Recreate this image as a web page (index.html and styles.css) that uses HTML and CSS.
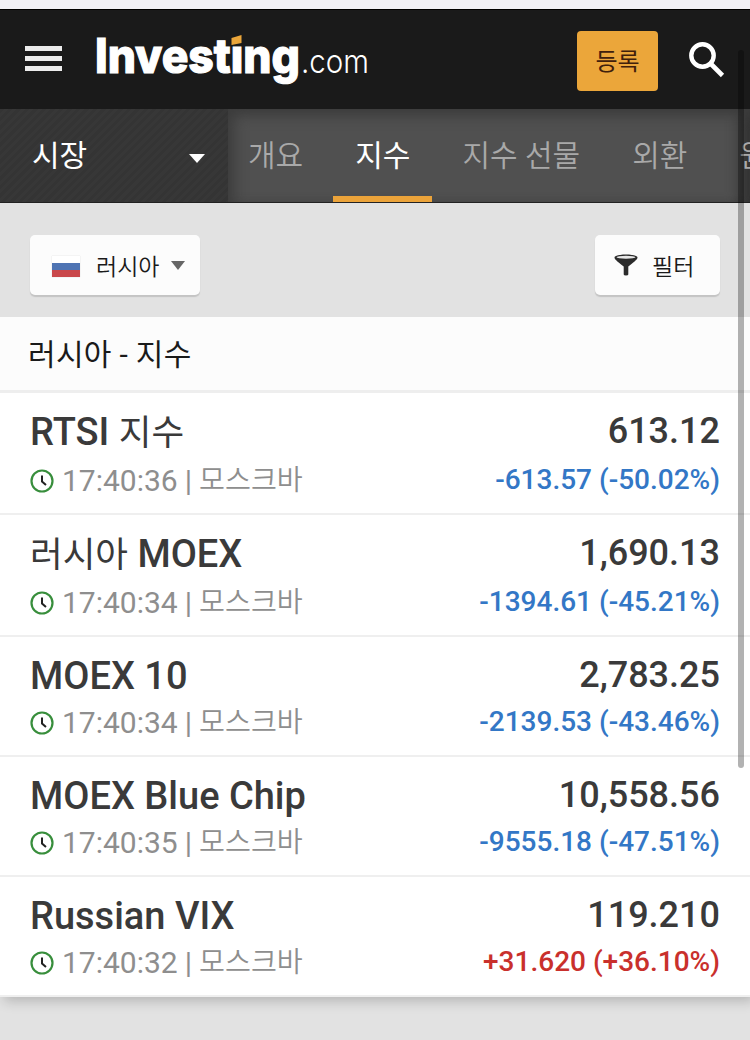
FILE: index.html
```html
<!doctype html>
<html lang="ko">
<head>
    <meta charset="utf-8">
    <meta content="width=device-width,initial-scale=1" name="viewport">
    <title>러시아 - 지수</title>
    <link rel="stylesheet" href="styles.css">
</head>
<body>
<div class="statusbar"></div>
<header class="header">
    <div class="menu"><i></i><i></i><i></i></div>
    <svg class="logo" width="280" height="60" viewBox="0 0 280 60">
        <text class="logo-name" x="-1" y="43" textLength="205" lengthAdjust="spacingAndGlyphs">Investing</text>
        <text class="logo-com" x="205" y="43" textLength="68" lengthAdjust="spacingAndGlyphs">.com</text>
        <rect x="134" y="0" width="13" height="15" fill="#1a1a1a"/>
        <path d="M135.500 8l10-3v8l-10 2z" fill="#eba63a"/>
    </svg>
    <a class="signup">등록</a>
    <svg class="search" width="36" height="36" viewBox="0 0 36 36" fill="none" stroke="#fff">
        <circle cx="13.500" cy="13.500" r="11.200" stroke-width="4.400"/>
        <path d="M21.500 21.500L33.500 33.500" stroke-width="4.600"/>
    </svg>
</header>
<nav class="nav">
    <div class="market">시장<i class="arrow"></i></div>
    <div class="tabs">
        <a class="tab">개요</a>
        <a class="tab active">지수</a>
        <a class="tab">지수 선물</a>
        <a class="tab">외환</a>
        <a class="tab">원</a>
    </div>
</nav>
<div class="filters">
    <div class="btn country"><i class="flag"></i>러시아<i class="arrow"></i></div>
    <div class="btn filter">
        <svg width="24" height="22" viewBox="0 0 24 22">
            <path d="M.5 3.500C.5-.5 23.500-.5 23.500 3.500C23.500 5 22 6.500 14.300 12.500V20.500Q14.300 21.500 12 21.500Q9.700 21.500 9.700 20.500V12.500C2 6.500.5 5 .5 3.500z" fill="#2b2b2b"/>
            <ellipse cx="12" cy="3.200" rx="9.500" ry="1.500" fill="#e8e8e8"/>
        </svg>
        필터
    </div>
</div>
<h1 class="title">러시아 - 지수</h1>
<section class="list">
    <div class="row ko">
        <div class="left">
            <div class="name">RTSI <span>지수</span></div>
            <div class="info"><svg class="clock" viewBox="0 0 24 24"><circle cx="12" cy="12" r="10.500"/><path d="M12 6.500v6l4 3.500"/></svg><span class="time">17:40:36</span><span class="bar">|</span><span class="city">모스크바</span></div>
        </div>
        <div class="right">
            <div class="last">613.12</div>
            <div class="change down">-613.57 (-50.02%)</div>
        </div>
    </div>
    <div class="row ko">
        <div class="left">
            <div class="name"><span>러시아</span> MOEX</div>
            <div class="info"><svg class="clock" viewBox="0 0 24 24"><circle cx="12" cy="12" r="10.500"/><path d="M12 6.500v6l4 3.500"/></svg><span class="time">17:40:34</span><span class="bar">|</span><span class="city">모스크바</span></div>
        </div>
        <div class="right">
            <div class="last">1,690.13</div>
            <div class="change down">-1394.61 (-45.21%)</div>
        </div>
    </div>
    <div class="row">
        <div class="left">
            <div class="name">MOEX 10</div>
            <div class="info"><svg class="clock" viewBox="0 0 24 24"><circle cx="12" cy="12" r="10.500"/><path d="M12 6.500v6l4 3.500"/></svg><span class="time">17:40:34</span><span class="bar">|</span><span class="city">모스크바</span></div>
        </div>
        <div class="right">
            <div class="last">2,783.25</div>
            <div class="change down">-2139.53 (-43.46%)</div>
        </div>
    </div>
    <div class="row">
        <div class="left">
            <div class="name">MOEX Blue Chip</div>
            <div class="info"><svg class="clock" viewBox="0 0 24 24"><circle cx="12" cy="12" r="10.500"/><path d="M12 6.500v6l4 3.500"/></svg><span class="time">17:40:35</span><span class="bar">|</span><span class="city">모스크바</span></div>
        </div>
        <div class="right">
            <div class="last">10,558.56</div>
            <div class="change down">-9555.18 (-47.51%)</div>
        </div>
    </div>
    <div class="row">
        <div class="left">
            <div class="name">Russian VIX</div>
            <div class="info"><svg class="clock" viewBox="0 0 24 24"><circle cx="12" cy="12" r="10.500"/><path d="M12 6.500v6l4 3.500"/></svg><span class="time">17:40:32</span><span class="bar">|</span><span class="city">모스크바</span></div>
        </div>
        <div class="right">
            <div class="last">119.210</div>
            <div class="change up">+31.620 (+36.10%)</div>
        </div>
    </div>
</section>
<div class="scrollbar"></div>
</body>
</html>
```
FILE: styles.css
```css
* {
    box-sizing: border-box;
}

body {
    margin: 0;
    height: 1040px;
    position: relative;
    overflow: hidden;
    background: #e2e2e2;
    font-family: Roboto, "Noto Sans CJK KR", sans-serif;
    color: #1a1a1a;
}

.statusbar {
    height: 9px;
    background: #f1f0f6;
}

.header {
    height: 100px;
    background: #1a1a1a;
    border-top: 1px solid #000;
    display: flex;
    align-items: center;
    padding: 0 25px;
}

.menu {
    width: 37px;
    height: 25px;
    margin-bottom: 2px;
    display: flex;
    flex-direction: column;
    justify-content: space-between;
}

.menu i {
    height: 5px;
    background: #ececec;
}

.logo {
    margin-left: 34px;
    overflow: visible;
}

.logo-name {
    font: 800 48px Inter, sans-serif;
    fill: #fff;
    stroke: #fff;
    stroke-width: 1.2px;
}

.logo-com {
    font: 300 33px Inter, sans-serif;
    fill: #fff;
}

.signup {
    margin: 3px 0 0 auto;
    width: 81px;
    height: 60px;
    border-radius: 4px;
    background: #eba63a;
    color: #40200c;
    font-size: 24px;
    line-height: 62px;
    text-align: center;
}

.search {
    margin-left: 31px;
}

/* nav */
.nav {
    height: 94px;
    display: flex;
    border-bottom: 1px solid #222;
    font-size: 30px;
    line-height: 94px;
    color: #fff;
}

.market {
    width: 228px;
    flex: none;
    padding: 0 23px 0 32px;
    display: flex;
    align-items: center;
    justify-content: space-between;
    background: repeating-linear-gradient(135deg, #343434 0 3px, #373737 3px 6px);
}

.arrow {
    border: 8px solid transparent;
    border-top: 9px solid #fff;
    border-bottom: 0;
}

.market .arrow {
    margin-top: 5px;
}

.tabs {
    flex: 1;
    overflow: hidden;
    display: flex;
    background: #505050;
    box-shadow: inset 8px 8px 14px -2px #3c3c3c, inset -16px 0 14px -6px #333;
    white-space: nowrap;
}

.tab {
    flex: none;
    padding: 0 22px;
    margin-right: 8px;
    color: #a9a9a9;
    font-weight: 350;
}

.tab:first-child {
    padding-left: 20px;
}

.tab.active {
    height: 94px;
    color: #fff;
    font-weight: 400;
    box-shadow: inset 0 -7px #eba33a;
}

/* filter buttons */
.filters {
    height: 114px;
    padding: 32px 30px 0;
    display: flex;
    justify-content: space-between;
}

.btn {
    height: 60px;
    display: flex;
    align-items: center;
    background: #fcfcfc;
    border-radius: 5px;
    box-shadow: 0 2px 1px #c4c4c4;
    font-size: 23px;
    font-weight: 350;
}

.country {
    width: 170px;
    padding-left: 22px;
}

.flag {
    width: 28px;
    height: 21px;
    margin: 2px 16px 0 0;
    background: linear-gradient(#fff 0 33%, #4f74b3 33% 66%, #c9474a 66%);
    box-shadow: 0 0 1px #ccc;
}

.country .arrow {
    margin-left: 12px;
    border-width: 9px 7px 0;
    border-top-color: #666;
}

.filter {
    width: 125px;
    padding-left: 19px;
    gap: 14px;
}

/* table */
.title {
    margin: 0;
    height: 76px;
    padding-left: 28px;
    position: relative;
    z-index: 1;
    background: #fcfcfc;
    border-bottom: 3px solid #eee;
    font-size: 30px;
    font-weight: 400;
    line-height: 75px;
    letter-spacing: .3px;
}

.list {
    background: #fff;
    box-shadow: 4px 4px 12px rgba(0, 0, 0, .2);
}

.row {
    height: 120px;
    padding: 0 30px;
    display: flex;
    justify-content: space-between;
    border-bottom: 2px solid #efefef;
    white-space: nowrap;
}

.ko {
    height: 122px;
}

.name {
    height: 62px;
    font-size: 38px;
    font-weight: 500;
    line-height: 78px;
    color: #3a3a3a;
}

.name span {
    font-size: 35.5px;
    font-weight: 400;
}

.ko .name {
    height: 64px;
}

.info {
    display: flex;
    align-items: center;
    height: 48px;
    font-size: 30px;
    line-height: 48px;
    color: #8e8e8e;
}

.clock {
    width: 24px;
    height: 24px;
    fill: none;
    stroke: #388e3c;
    stroke-width: 2.2;
}

.clock path {
    stroke: #222;
    stroke-width: 2;
}

.time {
    margin-left: 8px;
}

.bar {
    margin: 0 7px;
}

.city {
    font-size: 28.2px;
    font-weight: 350;
    line-height: 50px;
}

.right {
    text-align: right;
}

.last {
    height: 62px;
    font-size: 36px;
    font-weight: 500;
    line-height: 77px;
    color: #3a3a3a;
}

.ko .last {
    height: 64px;
}

.change {
    font-size: 28px;
    font-weight: 500;
    line-height: 46px;
}

.down {
    color: #3377c6;
}

.up {
    color: #c9302c;
}

.scrollbar {
    position: absolute;
    z-index: 2;
    top: 50px;
    left: 738px;
    width: 6px;
    height: 718px;
    border-radius: 3px;
    background: rgba(0, 0, 0, .3);
}
```
